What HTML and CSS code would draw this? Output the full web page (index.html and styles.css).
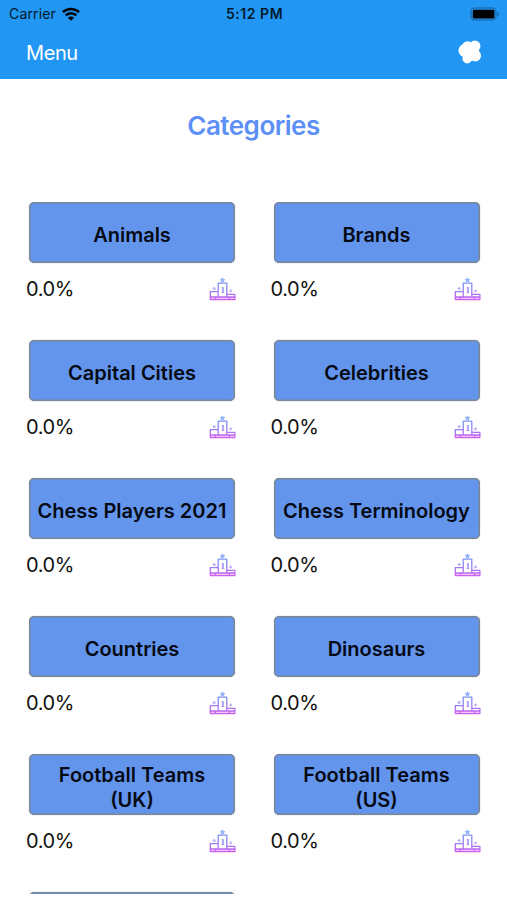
FILE: index.html
```html
<!DOCTYPE html>
<html lang="en">
<head>
    <meta charset="UTF-8">
    <meta name="viewport" content="width=device-width, initial-scale=1.0">
    <title>Categories</title>
    <link rel="stylesheet" href="styles.css">
</head>
<body>
    <header class="top">
        <div class="status-bar">
            <div class="carrier">
                <span>Carrier</span>
                <svg class="wifi" viewBox="0 0 18 14" width="18" height="14">
                    <path d="M.9 5.2a11.6 11.6 0 0 1 16.2 0M3.7 8.4a7.5 7.5 0 0 1 10.6 0" fill="none" stroke="#000" stroke-width="2.5"/>
                    <path d="M9 13.8L5.9 10.8a4.4 4.4 0 0 1 6.2 0z"/>
                </svg>
            </div>
            <span class="time">5:12 PM</span>
            <svg class="battery" viewBox="0 0 30 14" width="30" height="14">
                <rect x="1" y="1" width="25" height="12" rx="3.6" fill="none" stroke="#10609f" stroke-width="1.1"/>
                <rect x="2.8" y="2.7" width="21.6" height="8.8" rx="1.2"/>
                <path d="M27.6 5a2.2 2.2 0 0 1 0 4.2z" fill="#10609f"/>
            </svg>
        </div>
        <nav class="nav-bar">
            <a class="menu">Menu</a>
            <svg class="cloud" viewBox="0 0 24 24" width="24" height="24" fill="#fff">
                <circle cx="7.3" cy="10.5" r="6.8"/>
                <circle cx="9.6" cy="6.6" r="5.4"/>
                <circle cx="16.8" cy="6.2" r="5.6"/>
                <circle cx="17.4" cy="15.8" r="5.6"/>
                <circle cx="9.2" cy="18.6" r="4.8"/>
                <circle cx="13" cy="12.5" r="8.4"/>
            </svg>
        </nav>
    </header>

    <h1 class="title">Categories</h1>

    <!-- podium icon shared by all the categories -->
    <svg class="defs" width="0" height="0">
        <defs>
            <linearGradient id="podiumColor" gradientUnits="userSpaceOnUse" x1="0" y1="0" x2="0" y2="24">
                <stop offset="0" stop-color="#6ba5fa"/>
                <stop offset="0.5" stop-color="#8b83f2"/>
                <stop offset="1" stop-color="#d45cf0"/>
            </linearGradient>
            <symbol id="podium" viewBox="0 0 27 24">
                <path d="M1.3 20h24.6v2.6H1.3z" fill="#d45cf0" opacity=".35"/>
                <g fill="none" stroke="url(#podiumColor)" stroke-width="1.3" stroke-linejoin="round">
                    <path d="M9.2 20V6.2h8.6V20M9.2 14.6H1.3v8h24.6v-5.2h-8.1M1.3 20h24.6M6.4 20v2.6M20.4 20v2.6"/>
                </g>
                <g fill="url(#podiumColor)">
                    <path d="M13.5 .3l1 1.5 1.8.5-1.2 1.4.1 1.8-1.7-.7-1.7.7.1-1.8-1.2-1.4 1.8-.5z" opacity=".75"/>
                    <circle cx="5.2" cy="11.6" r="1.5" opacity=".6"/>
                    <circle cx="21.6" cy="14" r="1.4" opacity=".6"/>
                    <text x="13.5" y="16.4" text-anchor="middle" class="place">1</text>
                </g>
            </symbol>
        </defs>
    </svg>

    <main class="categories" id="categories"></main>

    <script type="text/javascript">
        const names = [
            'Animals', 'Brands',
            'Capital Cities', 'Celebrities',
            'Chess Players 2021', 'Chess Terminology',
            'Countries', 'Dinosaurs',
            'Football Teams (UK)', 'Football Teams (US)',
            ''
        ];
        const categories = document.getElementById('categories');

        names.forEach(function(name) {
            const item = document.createElement('div');
            item.className = 'category';
            item.innerHTML = `<button class="category-button">${name}</button>`;
            if (name) {
                item.innerHTML += `
                <div class="score">
                    <span>0.0%</span>
                    <svg class="podium" width="27" height="24"><use href="#podium"/></svg>
                </div>`;
            }
            categories.appendChild(item);
        });
    </script>
</body>
</html>
```
FILE: styles.css
```css
body {
    display: flex;
    flex-direction: column;
    height: 900px;
    margin: 0;
    background-color: white;
    overflow: hidden;
    font-family: Inter, "Liberation Sans", sans-serif;
    color: #111;
}

.top {
    height: 79px;
    flex-shrink: 0;
    background-color: #2296f3;
}

.status-bar {
    display: grid;
    grid-template-columns: 1fr auto 1fr;
    align-items: center;
    height: 27px;
    padding: 0 7px 0 9px;
    color: #04192c;
    font-size: 14px;
}

.carrier {
    display: flex;
    align-items: center;
    gap: 6px;
    letter-spacing: 0.15px;
}

.time {
    font-weight: 600;
    letter-spacing: 0.55px;
}

.battery {
    justify-self: end;
}

.nav-bar {
    display: flex;
    justify-content: space-between;
    align-items: center;
    height: 50px;
    padding: 0 25px 0 26px;
}

.menu {
    padding-top: 1px;
    color: white;
    font-size: 20px;
    letter-spacing: -0.4px;
}

.title {
    flex-shrink: 0;
    margin: 31px 0 60px;
    text-align: center;
    font-size: 26px;
    line-height: 32px;
    font-weight: 600;
    letter-spacing: -0.5px;
    color: #5c90f6;
}

.defs {
    display: block;
    flex-shrink: 0;
}

.place {
    font: bold 9px "Liberation Serif", serif;
}

.categories {
    display: grid;
    grid-template-columns: 212px 212px;
    grid-auto-rows: 138px;
    column-gap: 32.5px;
    height: 692px;
    flex-shrink: 0;
    padding-left: 26px;
    overflow: hidden;
}

.category-button {
    display: block;
    box-sizing: border-box;
    width: 206px;
    height: 61px;
    margin: 0 3px;
    padding: 6px 6px 0;
    border: 1px solid #7b8798;
    border-radius: 5px;
    box-shadow: inset 0 0 0 0.5px #7b8798, 0 0 1px #7b8798;
    background-color: #6495ed;
    color: #050a14;
    font-family: inherit;
    font-size: 20px;
    font-weight: 600;
    line-height: 25px;
}

.score {
    display: flex;
    justify-content: space-between;
    align-items: center;
    height: 24px;
    margin-top: 14px;
    padding-right: 2px;
    font-size: 20px;
    letter-spacing: -0.4px;
}
```
